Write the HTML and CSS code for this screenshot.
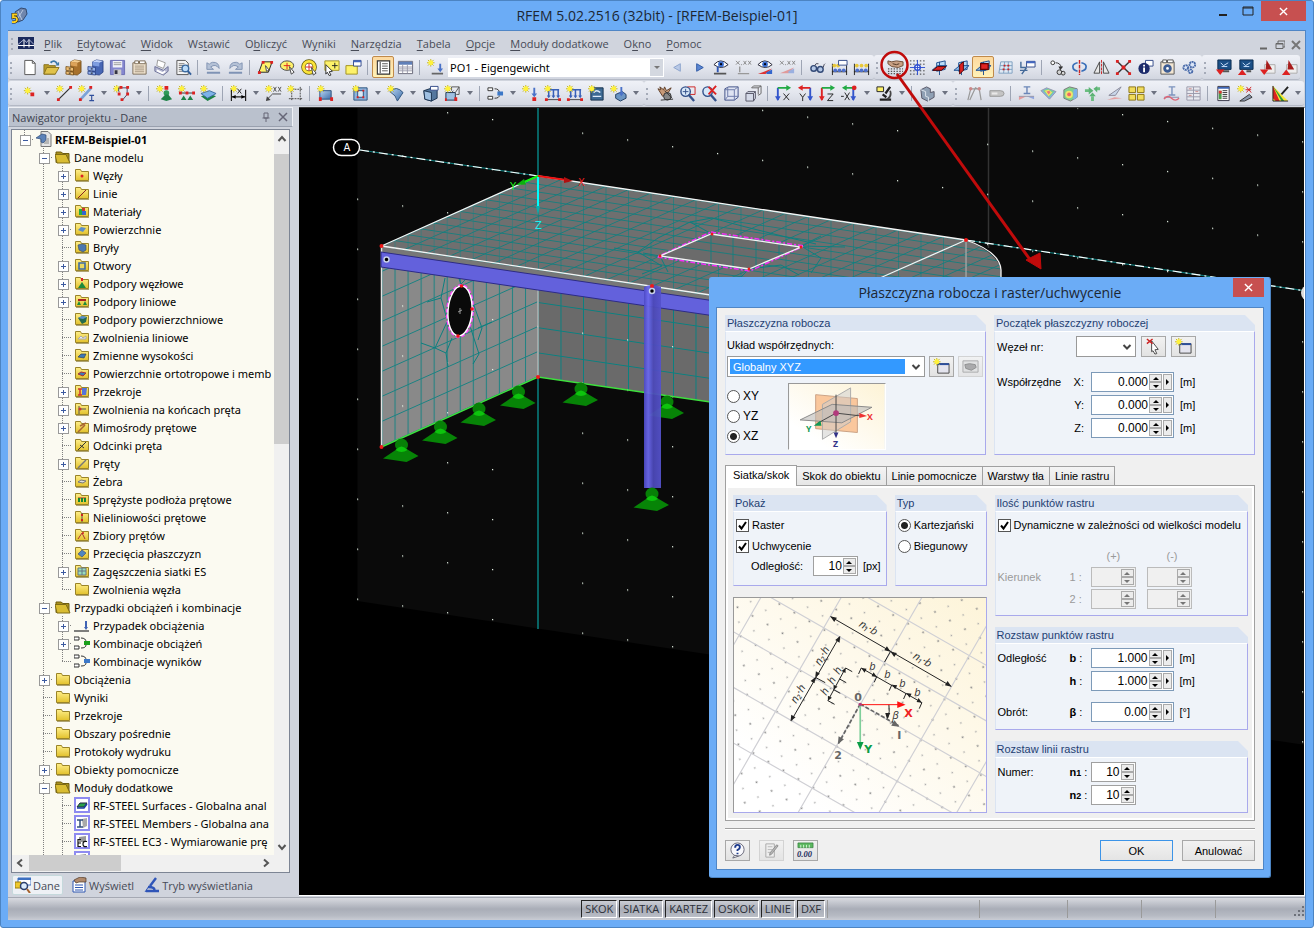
FILE: index.html
```html
<!DOCTYPE html>
<html lang="pl">
<head>
<meta charset="utf-8">
<title>RFEM 5.02.2516 (32bit) - [RFEM-Beispiel-01]</title>
<link rel="stylesheet" href="styles.css">
</head>
<body>
<svg class="defs" aria-hidden="true">
<defs>
<linearGradient id="gFold" x1="0" y1="0" x2="0" y2="1"><stop offset="0" stop-color="#ffef8a"/><stop offset="1" stop-color="#e2c12c"/></linearGradient>
<linearGradient id="gCream" x1="0" y1="1" x2="1" y2="0"><stop offset=".2" stop-color="#fff"/><stop offset="1" stop-color="#fdf3d6"/></linearGradient>
<linearGradient id="gBlue" x1="0" y1="0" x2="1" y2="1"><stop offset="0" stop-color="#b9d4f2"/><stop offset="1" stop-color="#3d6ea8"/></linearGradient>
<g id="st"><path d="M4 0v8M0 4h8M1 1l6 6M7 1l-6 6" stroke="#c4b41c" fill="none"/><circle cx="4" cy="4" r="2.600" fill="#fff23a"/></g>
<g id="eye"><path d="M1 6q7-8 15 0q-7 6-15 0z" fill="#fff" stroke="#223"/><circle cx="8.500" cy="5.500" r="3" fill="#3c6fd0"/><circle cx="8.500" cy="5.500" r="1.200" fill="#001"/></g>
<g id="plane"><path d="M6 4l9-2v9l-9 2z" fill="#b9dbf6" stroke="#1e4f8f"/><path d="M1 12h10l6-5h-10z" fill="#7fb4e8" fill-opacity=".8" stroke="#1e4f8f"/><path d="M9 3v14" stroke="#1e4f8f"/></g>
</defs>
<symbol id="new" viewBox="0 0 18 18"><path d="M4 1.500h8l3 3v12h-11z" fill="#fff" stroke="#555"/><path d="M12 1.500v3h3" fill="none" stroke="#555"/></symbol>
<symbol id="open" viewBox="0 0 18 18"><path d="M1 6h5l1 1h6v9h-12z" fill="#b89a28" stroke="#8a7420"/><path d="M4 9h13l-4 7h-12z" fill="#e0c24a" stroke="#8a7420"/><path d="M8 4q4-4 7 1" fill="none" stroke="#3d78a8" stroke-width="2"/><path d="M17 3v4h-4z" fill="#3d78a8"/></symbol>
<symbol id="cab" viewBox="0 0 18 18"><path d="M6 3l4-2 7 1v12l-4 3-7-1z" fill="#a8712c" stroke="#6b4712" stroke-width=".8"/><path d="M6 3l7 1 4-2-7-1z" fill="#f3cd90"/><path d="M6 3l7 1v4l-7-1z" fill="#dca35a"/><path d="M1 8l8 1v4l-8-1zM1 13l8 1v3l-8-1z" fill="#eebd72" stroke="#6b4712" stroke-width=".8"/><path d="M4 10.500h2M4 15h2" stroke="#222"/></symbol>
<symbol id="cabb" viewBox="0 0 18 18"><path d="M6 3l4-2 7 1v12l-4 3-7-1z" fill="#4766b4" stroke="#22397c" stroke-width=".8"/><path d="M6 3l7 1 4-2-7-1z" fill="#c2d4fa"/><path d="M6 3l7 1v4l-7-1z" fill="#7f9ee0"/><path d="M1 8l8 1v4l-8-1zM1 13l8 1v3l-8-1z" fill="#94b2ee" stroke="#22397c" stroke-width=".8"/><path d="M4 10.500h2M4 15h2" stroke="#111"/></symbol>
<symbol id="save" viewBox="0 0 18 18"><path d="M1.500 1.500h15v15h-15z" fill="#8587cf" stroke="#6a6cb4"/><path d="M4 2h10v7h-10z" fill="#f2f2f8"/><path d="M5 4h8M5 6h8" stroke="#999"/><path d="M5 11h8v6h-8z" fill="#ccc"/><path d="M6 12h3v4h-3z" fill="#334"/></symbol>
<symbol id="note" viewBox="0 0 18 18"><path d="M2 4h14v12h-14z" fill="#f3e6d2" stroke="#7a6a55"/><path d="M4 2h4v3h-4zM9 2h6v3h-6z" fill="#fff" stroke="#7a6a55"/><path d="M4 7.500h10M4 9.500h10M4 11.500h10M4 13.500h10" stroke="#a0927c"/></symbol>
<symbol id="print" viewBox="0 0 18 18"><path d="M5 1l8 3-2 6-7-3z" fill="#fff" stroke="#999"/><path d="M2 8l9 4 5-4v5l-5 4-9-4z" fill="#b5b8d2" stroke="#6b7096"/><path d="M4 12l6 3 3-2" stroke="#fff" fill="none" stroke-width="2"/></symbol>
<symbol id="prev" viewBox="0 0 18 18"><path d="M2 1.500h9l3 3v12h-12z" fill="#f4f4f4" stroke="#555"/><path d="M4 5h6M4 7h6M4 9h4M4 11h4M4 13h5" stroke="#777"/><circle cx="11" cy="10" r="3.500" fill="#bcdcf8" stroke="#3c6ba0" stroke-width="1.500"/><path d="M13.500 12.500l3.500 4" stroke="#335f9a" stroke-width="2"/></symbol>
<symbol id="undo" viewBox="0 0 18 18"><path d="M2 4v7h7l-3-2.500q5-4 9 1.500q0-7-7-6.500q-2 .5-3.500 2z" fill="#b4c1d6" stroke="#8294b2"/><path d="M2 14.500h14" stroke="#7f93b5" stroke-width="2"/></symbol>
<symbol id="redo" viewBox="0 0 18 18"><path d="M16 4v7h-7l3-2.500q-5-4-9 1.500q0-7 7-6.500q2 .5 3.500 2z" fill="#b4c1d6" stroke="#8294b2"/><path d="M2 14.500h14" stroke="#7f93b5" stroke-width="2"/></symbol>
<symbol id="selpar" viewBox="0 0 18 18"><path d="M6 3h10l-4 11h-10z" fill="#fdf26a" stroke="#222"/><path d="M5 2h3v3h-3zM14 2h3v3h-3zM1 13h3v3h-3z" fill="#d22"/><path d="M9 7l4 5-3 1z" fill="#fff" stroke="#444"/></symbol>
<symbol id="selell" viewBox="0 0 18 18"><ellipse cx="8.500" cy="7" rx="7" ry="5" fill="#fdf26a" stroke="#444"/><path d="M8.500 4v7M5 7h7" stroke="#d22"/><path d="M11 8l5 6-3 2z" fill="#fff" stroke="#444"/></symbol>
<symbol id="selcir" viewBox="0 0 18 18"><circle cx="8.500" cy="8.500" r="6" fill="#fff" stroke="#5f5600" stroke-width="4.500"/><circle cx="8.500" cy="8.500" r="6" fill="none" stroke="#fbe33a" stroke-width="3"/><path d="M8.500 4.500v8M4.500 8.500h8" stroke="#d22"/><path d="M11 9l5 6-3 2z" fill="#fff" stroke="#444"/></symbol>
<symbol id="selrec" viewBox="0 0 18 18"><path d="M2 2h15v10h-15z" fill="#fdf26a" stroke="#a09020"/><path d="M12.500 4v6M9.500 7h6" stroke="#222"/><path d="M3 6l7 7-3.500.5 2 3.500-2 .5-2-3.500-1.500 2z" fill="#fff" stroke="#333"/></symbol>
<symbol id="selwin" viewBox="0 0 18 18"><path d="M1 7h12v9h-12z" fill="#fdf26a" stroke="#a09020"/><path d="M9 1.500h8v6h-8z" fill="#fff" stroke="#334a88"/><path d="M9 2.500h8" stroke="#4467c0" stroke-width="2"/></symbol>
<symbol id="nav" viewBox="0 0 18 18"><path d="M2.500 2h13v14h-13z" fill="#fff" stroke="#333" stroke-width="1.200"/><path d="M5.500 3v12" stroke="#333"/><path d="M7.500 5h6M7.500 7.500h6M7.500 10h6M7.500 12.500h6" stroke="#555"/></symbol>
<symbol id="table" viewBox="0 0 18 18"><path d="M1.500 2.500h15v13h-15z" fill="#fff" stroke="#667"/><path d="M2 3h14v3h-14z" fill="#5f7fb8"/><path d="M2 8.500h14M2 10.500h14M2 12.500h14M6 6v9M11 6v9" stroke="#99a"/></symbol>
<symbol id="lcase" viewBox="0 0 18 18"><use href="#st"/><path d="M5 15.500h12" stroke="#666" stroke-width="2"/><path d="M13 5v5h-2l3 4 3-4h-2v-5z" fill="#4a72c8"/></symbol>
<symbol id="left" viewBox="0 0 18 18"><path d="M12 5v8l-7-4z" fill="#b9c9e6" stroke="#8ba3cc"/></symbol>
<symbol id="right" viewBox="0 0 18 18"><path d="M6 5v8l7-4z" fill="#5b86d2" stroke="#2f59a6"/></symbol>
<symbol id="eyel" viewBox="0 0 18 18"><use href="#eye"/><path d="M5 8v6" stroke="#2e56b4" stroke-width="2"/><path d="M1 15.500h13" stroke="#555" stroke-width="2"/></symbol>
<symbol id="xx1" viewBox="0 0 18 18"><path d="M1 2l4 4M5 2l-4 4M6.500 6h1M9 2l3 4M12 2l-3 4M14 2l3 4M17 2l-3 4" stroke="#888"/><path d="M5 8v6M3 15.500h12" stroke="#999" stroke-width="1.500"/></symbol>
<symbol id="eyer" viewBox="0 0 18 18"><use href="#eye"/><path d="M1 16l15-6-7 6z" fill="#d33"/><path d="M10 14l6-3v5h-6z" fill="#36c"/></symbol>
<symbol id="xx2" viewBox="0 0 18 18"><path d="M1 2l4 4M5 2l-4 4M6.500 6h1M9 2l3 4M12 2l-3 4M14 2l3 4M17 2l-3 4" stroke="#888"/><path d="M1 15l15-6-6 6z" fill="#e09a9a"/><path d="M10 13l6-3v5h-6z" fill="#9ab0e0"/></symbol>
<symbol id="glass" viewBox="0 0 18 18"><circle cx="5" cy="10" r="3" fill="#b5c8e6" stroke="#334a77" stroke-width="1.500"/><circle cx="12" cy="11" r="3" fill="#b5c8e6" stroke="#334a77" stroke-width="1.500"/><path d="M6 7q1-3 4-2M15 9q1-4 2-4" stroke="#445" fill="none"/></symbol>
<symbol id="hist" viewBox="0 0 18 18"><path d="M1.500 5v12M16.500 5v12M1 13.500h16" stroke="#222"/><g fill="#4e70cc"><circle cx="4.500" cy="12" r="2"/><circle cx="9" cy="12" r="2"/><circle cx="13.500" cy="12" r="2"/></g><g fill="#e8c83a"><circle cx="3.500" cy="7" r="2"/><circle cx="7.500" cy="7" r="2"/></g><path d="M8 1.500h9v5h-9z" fill="#fff" stroke="#334a88"/></symbol>
<symbol id="hist2" viewBox="0 0 18 18"><path d="M1.500 5v12M16.500 5v12M1 13.500h16" stroke="#222"/><g fill="#4e70cc"><circle cx="4.500" cy="12" r="2"/><circle cx="9" cy="12" r="2"/><circle cx="13.500" cy="12" r="2"/></g><g fill="#e8c83a"><circle cx="4" cy="7" r="2"/><circle cx="9" cy="7" r="2"/><circle cx="14" cy="7" r="2"/></g></symbol>
<symbol id="wplane" viewBox="0 0 18 18"><path d="M1 10.500h16M1 13h16M1 15.500h16" stroke="#555" stroke-width="1.300" stroke-dasharray="1.500 1.500"/><path d="M1 2l4 1 5-1 7 1v4l-5 2-7-1-4-3z" fill="#c9a184" stroke="#6b4a33"/><path d="M6 5l4 1 3-1" stroke="#4d3322" fill="none"/></symbol>
<symbol id="wgrid" viewBox="0 0 18 18"><path d="M1 2h16M1 5.500h16M1 12.500h16M1 16h16" stroke="#333" stroke-dasharray="1.500 2"/><circle cx="9" cy="9" r="3" fill="#eef" stroke="#2f50d0" stroke-width="1.500"/><path d="M9 1v16M1 9h16" stroke="#2f50d0"/></symbol>
<symbol id="pl1" viewBox="0 0 18 18"><use href="#plane"/><path d="M2 12h9l5-4h-9z" fill="#d22" stroke="#500"/></symbol>
<symbol id="pl2" viewBox="0 0 18 18"><use href="#plane"/><path d="M7 6l4-3v9l-4 4z" fill="#d22" stroke="#500"/></symbol>
<symbol id="pl3" viewBox="0 0 18 18"><use href="#plane"/><path d="M6 5h8v6h-8z" fill="#e02424" stroke="#600" stroke-width="1.300"/></symbol>
<symbol id="shear" viewBox="0 0 18 18"><path d="M4 3h12v12h-14zM3 7h13M3 11h13M8 3l-1 12M12 3v12" fill="#dfe9f4" stroke="#7fa0c0"/><path d="M7 6h2v2h-2zM11 6h2v2h-2zM6 10h2v2h-2zM11 10h2v2h-2z" fill="#c22"/></symbol>
<symbol id="lay" viewBox="0 0 18 18"><path d="M8 2.500h9v6h-9z" fill="#fff" stroke="#334a88"/><path d="M8 3.500h9" stroke="#4467c0" stroke-width="2"/><path d="M2 3v6h6M3 16l5-7M1 12h8" stroke="#446a99" fill="none" stroke-width="1.500"/></symbol>
<symbol id="move" viewBox="0 0 18 18"><circle cx="4" cy="4" r="2" fill="#fff" stroke="#333"/><path d="M7 4q5 0 6 5" fill="none" stroke="#333"/><path d="M10 8h5l-3 4z" fill="#333"/><circle cx="11" cy="14" r="2.500" fill="#d5d5d5" stroke="#333"/><circle cx="15" cy="15" r="2" fill="#d5d5d5" stroke="#333"/></symbol>
<symbol id="rot" viewBox="0 0 18 18"><path d="M7 4q-5 1-5 4 0 4 5 5M11 4q5 1 5 4 0 4-5 5" fill="none" stroke="#3a6fb8" stroke-width="1.800"/><path d="M9 1v16" stroke="#c22" stroke-width="1.500" stroke-dasharray="4 1"/></symbol>
<symbol id="mir" viewBox="0 0 18 18"><path d="M7 3v12h-6zM11 3v12h6z" fill="#e8e8e8" stroke="#444"/><path d="M9 1v16" stroke="#c22" stroke-dasharray="3 1"/></symbol>
<symbol id="div" viewBox="0 0 18 18"><path d="M2 2l14 14M16 2l-14 14" stroke="#333" stroke-width="1.500"/><path d="M1 1h3v3h-3zM14 1h3v3h-3zM1 14h3v3h-3zM14 14h3v3h-3zM7 7h4v4h-4z" fill="#d22"/></symbol>
<symbol id="info" viewBox="0 0 18 18"><path d="M9 1.500h8v6h-8z" fill="#fff" stroke="#334a88"/><circle cx="7.500" cy="10" r="6" fill="#1c2b6b"/><path d="M7.500 9v5M7.500 6v2" stroke="#fff" stroke-width="2"/></symbol>
<symbol id="opt" viewBox="0 0 18 18"><path d="M2 3h14v13h-14z" fill="#f3e6d2" stroke="#555"/><path d="M4 1h4v3h-4zM9 1h6v3h-6z" fill="#fff" stroke="#555"/><circle cx="9" cy="10" r="3" fill="#fff" stroke="#3b5b93" stroke-width="3"/></symbol>
<symbol id="gears" viewBox="0 0 18 18"><g fill="#dbe6f8" stroke="#4769a8" stroke-width="2" stroke-dasharray="2 .6"><circle cx="5" cy="9" r="2.500"/><circle cx="12" cy="6" r="3"/><circle cx="10" cy="13" r="2"/></g></symbol>
<symbol id="mon1" viewBox="0 0 18 18"><path d="M3 1h14v10h-14z" fill="#1b4f86" stroke="#0d2d50"/><path d="M6 4l3 3 5-3M7 8h6" stroke="#cfe4ff" fill="none"/><path d="M8 13h7" stroke="#555" stroke-width="2"/><path d="M1 11h9l-4.500 6z" fill="#d22"/></symbol>
<symbol id="mon2" viewBox="0 0 18 18"><path d="M3 1h14v10h-14z" fill="#1b4f86" stroke="#0d2d50"/><path d="M6 4l3 3 5-3M7 8h6" stroke="#cfe4ff" fill="none"/><path d="M10 13h5" stroke="#555" stroke-width="2"/><path d="M1 17h9l-4.500-6z" fill="#d22"/></symbol>
<symbol id="ar1" viewBox="0 0 18 18"><path d="M6 6h11v9h-11z" fill="#eee" stroke="#aaa"/><path d="M8 1l6 10h-7z" fill="#a81c1c"/><path d="M1 11h9l-4.500 6z" fill="#d22"/></symbol>
<symbol id="ar2" viewBox="0 0 18 18"><path d="M6 6h11v9h-11z" fill="#eee" stroke="#aaa"/><path d="M8 1l6 10h-7z" fill="#a81c1c"/><path d="M1 17h9l-4.500-6z" fill="#d22"/></symbol>

<symbol id="node" viewBox="0 0 18 18"><use href="#st" x="3" y="2"/><path d="M10 8h4v4h-4z" fill="#d22"/></symbol>
<symbol id="line" viewBox="0 0 18 18"><use href="#st"/><path d="M3 15l12-12" stroke="#333" stroke-width="1.300"/><path d="M1 14h3v3h-3zM14 1h3v3h-3z" fill="#d22"/></symbol>
<symbol id="member" viewBox="0 0 18 18"><use href="#st"/><path d="M3 15l11-12" stroke="#7ba2d8" stroke-width="3"/><path d="M1 14h3v3h-3zM12 1h3v3h-3z" fill="#d22"/><path d="M12 11h5M12 16.500h5M14.500 11v5" stroke="#2f4f9c" stroke-width="1.200"/></symbol>
<symbol id="poly" viewBox="0 0 18 18"><use href="#st"/><path d="M6 7v-4h9v7l-5 6" fill="none" stroke="#446"/><path d="M5 8h3v3h-3zM7 1h3v3h-3zM14 1h3v3h-3zM14 8h3v3h-3zM8 14h3v3h-3z" fill="#d22"/></symbol>
<symbol id="sup" viewBox="0 0 18 18"><use href="#st"/><path d="M9 1h4v4h-4z" fill="#d22"/><circle cx="11" cy="8.500" r="3" fill="#2e9b57"/><path d="M10 10l-5 5 6 2 6-2-4-5z" fill="#1e8246"/></symbol>
<symbol id="lsup" viewBox="0 0 18 18"><use href="#st"/><path d="M2 8.500h14" stroke="#333"/><path d="M1 7h3v3h-3zM8 7h3v3h-3zM15 7h3v3h-3z" fill="#d22"/><path d="M6 11l3 5h-6zM13 11l3 5h-6z" fill="#1e8246"/></symbol>
<symbol id="ssup" viewBox="0 0 18 18"><path d="M1 12l7 5 9-5-7-3z" fill="#1e8246"/><path d="M1 9l7 5 9-5-7-3z" fill="#7eb3e8" stroke="#3a6b9c"/><use href="#st"/></symbol>
<symbol id="dim" viewBox="0 0 18 18"><use href="#st"/><path d="M1.500 5v12M16.500 5v12M2 12.500h14" stroke="#222" stroke-width="1.300"/><path d="M2 12.500l4-2v4zM16 12.500l-4-2v4z"/><path d="M8 4l4 5M12 4l-4 5" stroke="#222"/></symbol>
<symbol id="txt" viewBox="0 0 18 18"><use href="#st"/><path d="M9 2l3 5M12 2l-3 5M14 2l3 5M17 2l-3 5" stroke="#555"/><path d="M17 9.500h-9l-6 6" stroke="#444" fill="none"/><path d="M1 17l1-5 4 4z" fill="#444"/></symbol>
<symbol id="guide" viewBox="0 0 18 18"><path d="M5 2v15M14 2v15M2 4.500h15M2 14.500h15" stroke="#444" stroke-dasharray="2 1"/><use href="#st"/></symbol>
<symbol id="surf" viewBox="0 0 18 18"><path d="M3 6h12v9h-12z" fill="url(#gBlue)" stroke="#2d527c"/><path d="M14 13h3v4h-3zM2 13h3v4h-3z" fill="#d22"/><use href="#st"/></symbol>
<symbol id="opng" viewBox="0 0 18 18"><path d="M2 3h14v13h-14z" fill="#8db4de" stroke="#2d527c"/><path d="M6 6h6v7h-6z" fill="#dde8f4" stroke="#2d527c"/><path d="M5 5h2v2h-2zM11 5h2v2h-2zM5 12h2v2h-2zM11 12h2v2h-2z" fill="#d22"/><use href="#st"/></symbol>
<symbol id="curv" viewBox="0 0 18 18"><path d="M3 7q7-7 14 1l-6 9q-1-6-8-10z" fill="url(#gBlue)" stroke="#2d527c"/><use href="#st"/></symbol>
<symbol id="solid" viewBox="0 0 18 18"><path d="M2 6l9-3 5 2v9l-6 3-7-2z" fill="#54779e" stroke="#1c3350"/><path d="M2 6l8 2v9l-7-2z" fill="#9fc0e2" stroke="#1c3350"/><path d="M9 1.500h8v4h-8z" fill="#fff" stroke="#334a88"/></symbol>
<symbol id="solid2" viewBox="0 0 18 18"><path d="M2 8h10v8h-10z" fill="#9fc0e2" stroke="#1c3350"/><path d="M8 6v-4h8v8h-3M10 6l-2 2M16 2l-4 6" fill="none" stroke="#555"/><path d="M11 13h3v4h-3zM1 14h2v3h-2z" fill="#d22"/><use href="#st"/></symbol>
<symbol id="comb" viewBox="0 0 18 18"><path d="M1 3h5v3h-5zM1 12h5v3h-5z" fill="#fff" stroke="#333"/><path d="M8 4q5 0 5 4M8 14q5 0 5-3" fill="none" stroke="#333"/><path d="M11 7h6v4h-6z" fill="#3c78c8"/></symbol>
<symbol id="nload" viewBox="0 0 18 18"><use href="#st"/><path d="M12 3v6h-2l3 4 3-4h-2v-6z" fill="#4a72c8"/><path d="M11 13h4v4h-4z" fill="#d22"/></symbol>
<symbol id="lload" viewBox="0 0 18 18"><path d="M4 5h12M5 5v7M10 5v7M15 5v7" stroke="#3760b8" stroke-width="1.600" fill="none"/><path d="M3 11h4l-2 3zM8 11h4l-2 3zM13 11h4l-2 3z" fill="#3760b8"/><path d="M2 15.500h15" stroke="#444"/><path d="M1 14h3v3h-3zM15 14h3v3h-3z" fill="#d22"/><use href="#st"/></symbol>
<symbol id="sload" viewBox="0 0 18 18"><path d="M3 3h13v13h-13z" fill="#3d6a94" stroke="#15304b"/><path d="M6 8q3-4 7 0M5 12h9" stroke="#dceafa" stroke-width="1.500" fill="none"/><use href="#st"/></symbol>
<symbol id="vload" viewBox="0 0 18 18"><path d="M6 10l7-3 4 3v4l-6 3-5-3z" fill="#6c96c4" stroke="#213f63"/><path d="M11 2v6h-2l3 4 3-4h-2v-6z" fill="#4a72c8"/><use href="#st"/></symbol>
<symbol id="pan" viewBox="0 0 18 18"><path d="M1 4l3 1-1-3 4 3 1-3 2 4 5-3-3 5-6 4z" fill="#c79a78" stroke="#5e3d26"/><circle cx="11" cy="12" r="4" fill="#888" stroke="#333"/><path d="M4 16l13-1M8 6l8 8" stroke="#333"/></symbol>
<symbol id="zoomw" viewBox="0 0 18 18"><path d="M9 2h8v8h-8z" fill="none" stroke="#c22"/><circle cx="7" cy="7" r="5" fill="#d7e7f8" stroke="#33518a" stroke-width="1.500"/><path d="M4 7h6M7 4v6" stroke="#33518a"/><path d="M10 10l6 7" stroke="#33518a" stroke-width="2.500"/></symbol>
<symbol id="zoomx" viewBox="0 0 18 18"><circle cx="7" cy="7" r="5" fill="#d7e7f8" stroke="#33518a" stroke-width="1.500"/><path d="M10 10l6 7" stroke="#33518a" stroke-width="2.500"/><path d="M8 2l8 8M16 1l-8 9" stroke="#d22" stroke-width="2"/></symbol>
<symbol id="cube" viewBox="0 0 18 18"><path d="M2 4l4-2h10v11l-4 3h-10z" fill="#dfe4f2" stroke="#3f4f86"/><path d="M2 5h10v11M12 5l4-3M5 2v10h11M5 12l-3 4" fill="none" stroke="#6b79a8"/></symbol>
<symbol id="cubes" viewBox="0 0 18 18"><path d="M7 3l2-2h8v8l-3 2M7 3h7v7M14 3l3-2" fill="#e8eaf2" stroke="#666"/><path d="M1 9l2-2h8v7l-2 3h-8zM1 9h8v8M9 9l2-2" fill="#d5dae8" stroke="#556"/></symbol>
<symbol id="vx" viewBox="0 0 18 18"><path d="M3 3v13" stroke="#35c" stroke-width="2"/><path d="M3 3h11" stroke="#2a4" stroke-width="2"/><path d="M12 0l5 3-5 3z" fill="#2a4"/><path d="M0 12h6l-3 5z" fill="#35c"/><path d="M9 9l6 7M15 9l-6 7" stroke="#222"/></symbol>
<symbol id="vy" viewBox="0 0 18 18"><path d="M14 3v13" stroke="#35c" stroke-width="2"/><path d="M14 3h-11" stroke="#d22" stroke-width="2"/><path d="M6 0l-5 3 5 3z" fill="#d22"/><path d="M11 12h6l-3 5z" fill="#35c"/><path d="M3 9l3 4v4M9 9l-3 4" stroke="#222" fill="none"/></symbol>
<symbol id="vz" viewBox="0 0 18 18"><path d="M3 3v13" stroke="#d22" stroke-width="2"/><path d="M3 3h11" stroke="#2a4" stroke-width="2"/><path d="M12 0l5 3-5 3z" fill="#2a4"/><path d="M0 12h6l-3 5z" fill="#d22"/><path d="M9 9.500h6l-6 7h6" stroke="#222" fill="none"/></symbol>
<symbol id="vmx" viewBox="0 0 18 18"><path d="M13 3v13" stroke="#35c" stroke-width="2"/><path d="M13 3h-10" stroke="#2a4" stroke-width="2"/><path d="M6 0l-5 3 5 3z" fill="#2a4"/><circle cx="14" cy="3" r="2.500" fill="#d22"/><path d="M10 12h6l-3 5z" fill="#35c"/><path d="M0 12h3M4 8l5 8M9 8l-5 8" stroke="#222"/></symbol>
<symbol id="micro" viewBox="0 0 18 18"><path d="M1 2h7v5h-7z" fill="#fdf26a" stroke="#222"/><path d="M15 2l-5 7M4 15.500h12M7 10l4 3" stroke="#222" stroke-width="2.400" fill="none"/><path d="M15 6q2 6-3 9" stroke="#444" stroke-width="1.800" fill="none"/></symbol>
<symbol id="visib" viewBox="0 0 18 18"><path d="M2 5l6-3 4 2v4l4-1v6l-7 4-6-3z" fill="#8fa0b4" stroke="#556"/><path d="M2 5l5 2v5l3 1v4" fill="none" stroke="#dfe6ee"/></symbol>
<symbol id="defo" viewBox="0 0 18 18"><path d="M2 16l3-12h9l2 12M4 16l6-13 4 2" fill="none" stroke="#999" stroke-width="1.300"/><circle cx="5" cy="4" r="1.800" fill="#c88"/><circle cx="14" cy="4" r="1.800" fill="#c88"/></symbol>
<symbol id="cyl" viewBox="0 0 18 18"><path d="M2 6h11q4 0 4 3t-4 3h-11z" fill="#c4c4c4" stroke="#999"/><path d="M4 8h6v2h-6z" fill="#e9e9e9"/></symbol>
<symbol id="ires" viewBox="0 0 18 18"><path d="M6 2h7M9.500 2v7M6 9h7" stroke="#6a86b8" stroke-width="1.500"/><path d="M1 16l8-4h-8z" fill="#e59a9a"/><path d="M9 12l8 3v-3z" fill="#8fa5dd"/><path d="M1 12h16" stroke="#99a"/></symbol>
<symbol id="sres" viewBox="0 0 18 18"><path d="M1 6l6-3 10 4-7 8z" fill="#7fb0e8" stroke="#99a"/><path d="M3 6l5-2 7 3-5 6z" fill="#7fd28f"/><path d="M5 6l4-1 4 3-4 4z" fill="#f1e36b"/><path d="M7 7l3-1 1 2-2 2z" fill="#e77"/></symbol>
<symbol id="vres" viewBox="0 0 18 18"><path d="M2 5l6-3 8 2v9l-7 4-7-3z" fill="#7fd28f" stroke="#777"/><path d="M12 5l4-1v9l-4 3z" fill="#7fb0e8"/><circle cx="7.500" cy="10" r="4" fill="#f1e36b"/><circle cx="7.500" cy="10" r="2" fill="#e66"/></symbol>
<symbol id="react" viewBox="0 0 18 18"><path d="M9 17v-5M1 6h5M17 4h-4" stroke="#6bbd80" stroke-width="3"/><path d="M5.500 12h7l-3.500-4zM5 2l5 4-5 4zM14 1v7l-4-4z" fill="#5cb375"/></symbol>
<symbol id="memr" viewBox="0 0 18 18"><path d="M3 11l13-9-6 9z" fill="#c9d7ea" stroke="#889"/><path d="M1 16l8-3 8 1z" fill="#e5a0a0"/></symbol>
<symbol id="grp" viewBox="0 0 18 18"><path d="M1 2h7v6h-7zM10 2h7v6h-7zM1 10h7v6h-7zM10 10h7v6h-7z" fill="#f1dc5c" stroke="#8a7414"/></symbol>
<symbol id="isec" viewBox="0 0 18 18"><path d="M6 2h7M9.500 2v8M6 10.500h7" stroke="#7c93bd" stroke-width="1.500"/><path d="M1 13h16" stroke="#88a"/><path d="M1 15q4-5 8-1t8 0" fill="none" stroke="#d67" stroke-width="1.500"/></symbol>
<symbol id="tabl" viewBox="0 0 18 18"><path d="M2 2h14v14h-14zM2 5.500h14M2 9h14M2 12.500h14M9 2v14" fill="#e8eaf0" stroke="#99a"/><path d="M4 4h3M11 7h3M4 11h3" stroke="#c88"/></symbol>
<symbol id="ctrl" viewBox="0 0 18 18"><path d="M3 1.500h12v15h-12z" fill="#fff" stroke="#334"/><path d="M3 3h12" stroke="#3f66b5" stroke-width="2"/><path d="M8 6h5M8 8h5M8 10h5M8 12h5M8 14h5" stroke="#333"/><path d="M4 6h3v9h-3z" fill="#4c9c4c"/><path d="M4 6h3v3h-3z" fill="#d33"/></symbol>
<symbol id="wand" viewBox="0 0 18 18"><path d="M3 17l10-7 3 3-8 4z" fill="#8a97ad" stroke="#333"/><path d="M9 5h6M10 2l5 6M15 2l-5 6" stroke="#c22"/><use href="#st"/></symbol>
<symbol id="colr" viewBox="0 0 18 18"><path d="M1 1v16h16z" fill="#f6e635"/><path d="M1 1v8l8 8h4z" fill="#2a9a3a"/><path d="M1 1v11l5 5h4z" fill="#f6e635"/><path d="M1 1v13l3 3h4z" fill="#d22"/><path d="M17 2l-7 8" stroke="#222" stroke-width="2"/><path d="M1 1v16h16" fill="none" stroke="#222"/></symbol>

<symbol id="f" viewBox="0 0 16 16"><path d="M1.500 2.500h5l1 2h7v9h-13z" fill="url(#gFold)" stroke="#9a8428"/><path d="M2 14.500h13" stroke="#7b6a20" opacity=".6"/></symbol>
<symbol id="fo" viewBox="0 0 16 16"><path d="M1 3h5l2 1.500h6v9h-13z" fill="#a8901c" stroke="#6f5d10"/><path d="M0 5.500h11l4 8.500h-13z" fill="#d9bc32" stroke="#7f6c14"/></symbol>
<symbol id="rf" viewBox="0 0 16 16"><path d="M5 .5h7l3 3v12h-10z" fill="#e4e4e4" stroke="#777"/><path d="M0 7l6-4 4 1v5l-3 3-2-1v-3z" fill="#5c82b8" stroke="#2e4a78" stroke-width=".7"/><path d="M11 8h2M9 10h4M8 12h5" stroke="#888"/></symbol>
<symbol id="mod" viewBox="0 0 16 16"><path d="M1 1h14v14h-14z" fill="#fff" stroke="#8e8bf0" stroke-width="2"/></symbol>
<symbol id="pin" viewBox="0 0 10 10"><path d="M3 1h4v5h-4zM1.500 6h7M5 6v4" fill="none" stroke="#667"/></symbol>
<symbol id="x" viewBox="0 0 10 10"><path d="M1 1l8 8M9 1l-8 8" fill="none" stroke="currentColor" stroke-width="1.500"/></symbol>
<symbol id="newwin" viewBox="0 0 18 18"><path d="M5 6h12v10h-12z" fill="#e4e4ee" stroke="#444"/><path d="M5 6.500h12" stroke="#2c4f9e" stroke-width="2"/><use href="#st"/></symbol>
<symbol id="sup7" viewBox="0 0 40 26"><circle cx="20" cy="7" r="6.500" fill="#078007"/><path d="M20 8l-18.500 12.500 23.500 3.500 12-6z" fill="#078407"/><path d="M14 12q6-7 12 0-6 4-12 0z" fill="#0dc40d"/></symbol>
</svg>

<div class="window">
<header class="titlebar">
  <svg class="applogo" viewBox="0 0 18 18"><path d="M5 5l6-4 5 1 1 5-4 6-5 2z" fill="#6f86ad" stroke="#334a70"/><path d="M8 4l4 9M13 3l-5 8" stroke="#b9c8e0"/><path d="M7 7.500h-4v3q4-1 4 2t-5 2.500" fill="none" stroke="#222" stroke-width="3"/><path d="M7 7.500h-4v3q4-1 4 2t-5 2.500" fill="none" stroke="#ffd21c" stroke-width="1.800"/></svg>
  <h1>RFEM 5.02.2516 (32bit) - [RFEM-Beispiel-01]</h1>
  <div class="winbtns">
    <button class="min" aria-label="Minimalizuj"><svg viewBox="0 0 10 10"><path d="M1 9h8" stroke="#222" stroke-width="2"/></svg></button>
    <button class="max" aria-label="Maksymalizuj"><svg viewBox="0 0 12 10"><path d="M1 1h10v8h-10z" fill="none" stroke="#222"/><path d="M1 2h10" stroke="#222"/></svg></button>
    <button class="close" aria-label="Zamknij"><svg viewBox="0 0 10 10"><use href="#x"/></svg></button>
  </div>
</header>

<div class="client">
<nav class="menubar">
  <span class="grip"></span>
  <svg class="bridge" viewBox="0 0 16 12"><path d="M0 0h16v12h-16z" fill="#1b2a5c"/><path d="M0 8.500h16M6 2.500v8M11 2.500v8" stroke="#fff"/><path d="M0 7.500l6-5 2.500 3 2.500-3 5 5" stroke="#cfd6ee" stroke-width=".8" fill="none"/></svg>
  <button><u>P</u>lik</button><button><u>E</u>dytować</button><button><u>W</u>idok</button><button>Ws<u>t</u>awić</button><button>O<u>b</u>liczyć</button><button>W<u>y</u>niki</button><button><u>N</u>arzędzia</button><button><u>T</u>abela</button><button><u>O</u>pcje</button><button><u>M</u>oduły dodatkowe</button><button>O<u>k</u>no</button><button><u>P</u>omoc</button>
  <div class="mdi">
    <button aria-label="Minimalizuj dokument"><svg viewBox="0 0 10 10"><path d="M1 8.500h7" stroke="#666" stroke-width="2"/></svg></button>
    <button aria-label="Przywróć dokument"><svg viewBox="0 0 10 10"><path d="M1 3.500h7v5h-7zM3 3v-2h7v6h-2M1 4h7" fill="none" stroke="#666"/></svg></button>
    <button aria-label="Zamknij dokument"><svg viewBox="0 0 10 10"><path d="M1 1l8 8M9 1l-8 8" stroke="#777" stroke-width="2"/></svg></button>
  </div>
</nav>

<div class="row">
<div class="toolbar">
<span class="grip"></span>
<button aria-label="Nowy"><svg><use href="#new"/></svg></button><button aria-label="Otwórz"><svg><use href="#open"/></svg></button><button aria-label="Menedżer"><svg><use href="#cab"/></svg></button><button aria-label="Bloki"><svg><use href="#cabb"/></svg></button><button aria-label="Zapisz"><svg><use href="#save"/></svg></button><button aria-label="Dane ogólne"><svg><use href="#note"/></svg></button><button aria-label="Drukuj"><svg><use href="#print"/></svg></button><button aria-label="Podgląd"><svg><use href="#prev"/></svg></button>
<i class="sep"></i>
<button aria-label="Cofnij"><svg><use href="#undo"/></svg></button><button aria-label="Ponów"><svg><use href="#redo"/></svg></button>
<i class="sep"></i>
<button aria-label="Wybór"><svg><use href="#selpar"/></svg></button><button aria-label="Wybór elipsą"><svg><use href="#selell"/></svg></button><button aria-label="Wybór pierścieniem"><svg><use href="#selcir"/></svg></button><button aria-label="Dodaj do wyboru"><svg><use href="#selrec"/></svg></button><button aria-label="Wybór specjalny"><svg><use href="#selwin"/></svg></button>
<i class="sep"></i>
<button class="on" aria-label="Nawigator"><svg><use href="#nav"/></svg></button><button aria-label="Tabela"><svg><use href="#table"/></svg></button>
<i class="sep"></i>
<button aria-label="Nowy przypadek"><svg><use href="#lcase"/></svg></button>
<select class="case" aria-label="Przypadek obciążenia"><option>PO1 - Eigengewicht</option></select>
<button aria-label="Poprzedni"><svg><use href="#left"/></svg></button><button aria-label="Następny"><svg><use href="#right"/></svg></button><button aria-label="Pokaż obciążenia"><svg><use href="#eyel"/></svg></button><button aria-label="Wartości obciążeń"><svg><use href="#xx1"/></svg></button><button aria-label="Pokaż wyniki"><svg><use href="#eyer"/></svg></button><button aria-label="Wartości wyników"><svg><use href="#xx2"/></svg></button>
<i class="sep"></i>
<button aria-label="Widok"><svg><use href="#glass"/></svg></button><button aria-label="Obliczenia"><svg><use href="#hist"/></svg></button><button aria-label="Oblicz wszystko"><svg><use href="#hist2"/></svg></button>
</div>
<div class="toolbar">
<span class="grip"></span>
<button aria-label="Płaszczyzna robocza"><svg><use href="#wplane"/></svg></button><button aria-label="Raster"><svg><use href="#wgrid"/></svg></button><button aria-label="Płaszczyzna XY"><svg><use href="#pl1"/></svg></button><button aria-label="Płaszczyzna YZ"><svg><use href="#pl2"/></svg></button><button class="on" aria-label="Płaszczyzna XZ"><svg><use href="#pl3"/></svg></button><button aria-label="Siatka"><svg><use href="#shear"/></svg></button><button aria-label="Układ"><svg><use href="#lay"/></svg></button>
<i class="sep"></i>
<button aria-label="Przesuń"><svg><use href="#move"/></svg></button><button aria-label="Obróć"><svg><use href="#rot"/></svg></button><button aria-label="Lustro"><svg><use href="#mir"/></svg></button><button aria-label="Podziel"><svg><use href="#div"/></svg></button><button aria-label="Informacje"><svg><use href="#info"/></svg></button><button aria-label="Ustawienia"><svg><use href="#opt"/></svg></button><button aria-label="Generuj"><svg><use href="#gears"/></svg></button>
</div>
<div class="toolbar last">
<span class="grip"></span>
<button aria-label="Import"><svg><use href="#mon1"/></svg></button><button aria-label="Eksport"><svg><use href="#mon2"/></svg></button><button aria-label="Import CAD"><svg><use href="#ar1"/></svg></button><button aria-label="Eksport CAD"><svg><use href="#ar2"/></svg></button>
</div>
</div>

<div class="row">
<div class="toolbar">
<span class="grip"></span>
<button aria-label="Węzeł"><svg><use href="#node"/></svg></button><button class="dd" aria-label="Więcej węzłów"></button><button aria-label="Linia"><svg><use href="#line"/></svg></button><button aria-label="Pręt"><svg><use href="#member"/></svg></button><button class="dd" aria-label="Więcej prętów"></button><button aria-label="Polilinia"><svg><use href="#poly"/></svg></button><button class="dd" aria-label="Więcej linii"></button>
<i class="sep"></i>
<button aria-label="Podpora węzłowa"><svg><use href="#sup"/></svg></button><button aria-label="Podpora liniowa"><svg><use href="#lsup"/></svg></button><button aria-label="Podpora powierzchniowa"><svg><use href="#ssup"/></svg></button>
<i class="sep"></i>
<button aria-label="Wymiar"><svg><use href="#dim"/></svg></button><button class="dd" aria-label="Więcej wymiarów"></button><button aria-label="Komentarz"><svg><use href="#txt"/></svg></button><button aria-label="Linia pomocnicza"><svg><use href="#guide"/></svg></button>
<i class="sep"></i>
<button aria-label="Powierzchnia"><svg><use href="#surf"/></svg></button><button class="dd" aria-label="Więcej powierzchni"></button><button aria-label="Otwór"><svg><use href="#opng"/></svg></button><button class="dd" aria-label="Więcej otworów"></button><button aria-label="Powierzchnia krzywa"><svg><use href="#curv"/></svg></button><button class="dd" aria-label="Więcej krzywych"></button><button aria-label="Bryła"><svg><use href="#solid"/></svg></button><button aria-label="Nowa bryła"><svg><use href="#solid2"/></svg></button><button class="dd" aria-label="Więcej brył"></button>
<i class="sep"></i>
<button aria-label="Kombinacja"><svg><use href="#comb"/></svg></button><button class="dd" aria-label="Więcej kombinacji"></button><button aria-label="Obciążenie węzłowe"><svg><use href="#nload"/></svg></button><button aria-label="Obciążenie prętowe"><svg><use href="#lload"/></svg></button><button aria-label="Obciążenie liniowe"><svg><use href="#lload"/></svg></button><button aria-label="Obciążenie powierzchniowe"><svg><use href="#sload"/></svg></button><button aria-label="Obciążenie bryłowe"><svg><use href="#vload"/></svg></button><button class="dd" aria-label="Więcej obciążeń"></button>
</div>
<div class="toolbar">
<span class="grip"></span>
<button aria-label="Przesuń widok"><svg><use href="#pan"/></svg></button><button aria-label="Powiększ okno"><svg><use href="#zoomw"/></svg></button><button aria-label="Pokaż całość"><svg><use href="#zoomx"/></svg></button><button aria-label="Perspektywa"><svg><use href="#cube"/></svg></button><button aria-label="Izometria"><svg><use href="#cubes"/></svg></button>
<i class="sep"></i>
<button aria-label="Widok X"><svg><use href="#vx"/></svg></button><button aria-label="Widok Y"><svg><use href="#vy"/></svg></button><button aria-label="Widok Z"><svg><use href="#vz"/></svg></button><button aria-label="Widok -X"><svg><use href="#vmx"/></svg></button><button class="dd" aria-label="Więcej widoków"></button><button aria-label="Tryb wyświetlania"><svg><use href="#micro"/></svg></button><button class="dd" aria-label="Więcej trybów"></button>
<i class="sep"></i>
<button aria-label="Widoczność"><svg><use href="#visib"/></svg></button><button class="dd" aria-label="Więcej widoczności"></button>
</div>
<div class="toolbar last">
<span class="grip"></span>
<button aria-label="Deformacje"><svg><use href="#defo"/></svg></button><button aria-label="Przekrój"><svg><use href="#cyl"/></svg></button>
<i class="sep"></i>
<button aria-label="Wyniki prętów"><svg><use href="#ires"/></svg></button><button aria-label="Wyniki powierzchni"><svg><use href="#sres"/></svg></button><button aria-label="Wyniki brył"><svg><use href="#vres"/></svg></button><button aria-label="Reakcje"><svg><use href="#react"/></svg></button><button aria-label="Wykresy"><svg><use href="#memr"/></svg></button><button aria-label="Grupy"><svg><use href="#grp"/></svg></button><button class="dd" aria-label="Więcej grup"></button><button aria-label="Sekcja"><svg><use href="#isec"/></svg></button><button aria-label="Tabele wyników"><svg><use href="#tabl"/></svg></button>
<i class="sep"></i>
<button aria-label="Panel"><svg><use href="#ctrl"/></svg></button><button aria-label="Kreator"><svg><use href="#wand"/></svg></button><button class="dd" aria-label="Więcej kreatorów"></button><button aria-label="Kolory"><svg><use href="#colr"/></svg></button><button class="dd" aria-label="Więcej kolorów"></button>
</div>
</div>

<div class="main">
<aside class="navigator">
  <div class="navhead"><h2>Nawigator projektu - Dane</h2><button aria-label="Przypnij"><svg><use href="#pin"/></svg></button><button aria-label="Zamknij nawigator"><svg><use href="#x"/></svg></button></div>
  <div class="treebox">
  <ul class="tree">
  <li class="root"><i class="g e minus"></i><svg><use href="#rf"/></svg><b>RFEM-Beispiel-01</b></li>
  <li><i class="g n"></i><i class="g v t minus"></i><svg><use href="#fo"/></svg>Dane modelu</li>
  <li><i class="g n"></i><i class="g v"></i><i class="g v t plus"></i><svg viewBox="0 0 16 16"><use href="#f"/><circle cx="8" cy="9" r="1.500" fill="#d22"/></svg>Węzły</li>
  <li><i class="g n"></i><i class="g v"></i><i class="g v t plus"></i><svg viewBox="0 0 16 16"><use href="#f"/><path d="M4 13l8-8" stroke="#822"/></svg>Linie</li>
  <li><i class="g n"></i><i class="g v"></i><i class="g v t plus"></i><svg viewBox="0 0 16 16"><use href="#f"/><path d="M5 6h3v6h-3z" fill="#2a4"/><path d="M8 8h4v4h-4z" fill="#36c"/><path d="M8 5h3v3h-3z" fill="#c33"/></svg>Materiały</li>
  <li><i class="g n"></i><i class="g v"></i><i class="g v t plus"></i><svg viewBox="0 0 16 16"><use href="#f"/><path d="M4 9l3-3 5 1-3 4z" fill="#5b8ec8"/></svg>Powierzchnie</li>
  <li><i class="g n"></i><i class="g v"></i><i class="g v t"></i><svg viewBox="0 0 16 16"><use href="#f"/><path d="M4 6l4-1 4 1v5l-3 2-4-2z" fill="#4c78b0" stroke="#456" stroke-width=".7"/></svg>Bryły</li>
  <li><i class="g n"></i><i class="g v"></i><i class="g v t plus"></i><svg viewBox="0 0 16 16"><use href="#f"/><path d="M5 6h6v6h-6z" fill="#e8d860" stroke="#3c6ca4" stroke-width="1.600"/></svg>Otwory</li>
  <li><i class="g n"></i><i class="g v"></i><i class="g v t plus"></i><svg viewBox="0 0 16 16"><use href="#f"/><path d="M8 7l4 6h-8z" fill="#1c8a3c"/><path d="M7 3h2v3h-2z" fill="#d22"/></svg>Podpory węzłowe</li>
  <li><i class="g n"></i><i class="g v"></i><i class="g v t plus"></i><svg viewBox="0 0 16 16"><use href="#f"/><path d="M4 7h8" stroke="#a22" stroke-width="2"/><path d="M5 8l2 4h-4zM11 8l2 4h-4z" fill="#1c8a3c"/></svg>Podpory liniowe</li>
  <li><i class="g n"></i><i class="g v"></i><i class="g v t"></i><svg viewBox="0 0 16 16"><use href="#f"/><path d="M4 7l4-2 5 1-1 5-4 2z" fill="#256b4c"/><path d="M4 7l4-2 5 1-4 2z" fill="#5b8ec8"/></svg>Podpory powierzchniowe</li>
  <li><i class="g n"></i><i class="g v"></i><i class="g v t"></i><svg viewBox="0 0 16 16"><use href="#f"/><path d="M4 10l3-3 2 2 3-2v3z" fill="#eee" stroke="#aaa"/></svg>Zwolnienia liniowe</li>
  <li><i class="g n"></i><i class="g v"></i><i class="g v t"></i><svg viewBox="0 0 16 16"><use href="#f"/><path d="M4 10l3-3h5l-2 4z" fill="#3d79b8" stroke="#345" stroke-width=".7"/></svg>Zmienne wysokości</li>
  <li><i class="g n"></i><i class="g v"></i><i class="g v t"></i><svg viewBox="0 0 16 16"><use href="#f"/><path d="M4 9l3-2 5 1-3 3z" fill="#3d79b8" stroke="#a33"/></svg>Powierzchnie ortotropowe i memb</li>
  <li><i class="g n"></i><i class="g v"></i><i class="g v t plus"></i><svg viewBox="0 0 16 16"><use href="#f"/><path d="M4 6h4M6 6v6M4 12h4" stroke="#c33" stroke-width="1.500"/><path d="M8 5h5l-1 7h-4z" fill="#5474d8"/></svg>Przekroje</li>
  <li><i class="g n"></i><i class="g v"></i><i class="g v t plus"></i><svg viewBox="0 0 16 16"><use href="#f"/><path d="M5 5v8M5 8h7" stroke="#555"/><circle cx="6" cy="8" r="1.500" fill="#c33"/></svg>Zwolnienia na końcach pręta</li>
  <li><i class="g n"></i><i class="g v"></i><i class="g v t plus"></i><svg viewBox="0 0 16 16"><use href="#f"/><path d="M4 13l7-7M6 7l6-3" stroke="#a63" stroke-width="1.500"/></svg>Mimośrody prętowe</li>
  <li><i class="g n"></i><i class="g v"></i><i class="g v t"></i><svg viewBox="0 0 16 16"><use href="#f"/><path d="M4 13l8-8M6 8l4 3" stroke="#333"/></svg>Odcinki pręta</li>
  <li><i class="g n"></i><i class="g v"></i><i class="g v t plus"></i><svg viewBox="0 0 16 16"><use href="#f"/><path d="M4 13l8-8" stroke="#777" stroke-width="1.500"/></svg>Pręty</li>
  <li><i class="g n"></i><i class="g v"></i><i class="g v t"></i><svg viewBox="0 0 16 16"><use href="#f"/><path d="M4 9l3-2 5 1-3 2z" fill="#ddd" stroke="#777"/></svg>Żebra</li>
  <li><i class="g n"></i><i class="g v"></i><i class="g v t"></i><svg viewBox="0 0 16 16"><use href="#f"/><path d="M4 7h8" stroke="#a22"/><path d="M5 7v4M8 7v4M11 7v4" stroke="#183" stroke-width="2"/></svg>Sprężyste podłoża prętowe</li>
  <li><i class="g n"></i><i class="g v"></i><i class="g v t"></i><svg viewBox="0 0 16 16"><use href="#f"/><path d="M8 4v9" stroke="#555"/><path d="M7 5h2v2h-2zM7 10h2v2h-2z" fill="#c22"/></svg>Nieliniowości prętowe</li>
  <li><i class="g n"></i><i class="g v"></i><i class="g v t"></i><svg viewBox="0 0 16 16"><use href="#f"/><path d="M4 12l4-6 3 6" stroke="#a33" fill="none"/><circle cx="9" cy="6" r="1" fill="#c22"/></svg>Zbiory prętów</li>
  <li><i class="g n"></i><i class="g v"></i><i class="g v t"></i><svg viewBox="0 0 16 16"><use href="#f"/><path d="M8 5l4 3-4 4-4-3z" fill="#4f86c0" stroke="#457" stroke-width=".7"/></svg>Przecięcia płaszczyzn</li>
  <li><i class="g n"></i><i class="g v"></i><i class="g v t plus"></i><svg viewBox="0 0 16 16"><use href="#f"/><path d="M4 5h8v7h-8zM4 8h8M8 5v7" fill="#9db" stroke="#678"/></svg>Zagęszczenia siatki ES</li>
  <li><i class="g n"></i><i class="g v"></i><i class="g v t end"></i><svg><use href="#f"/></svg>Zwolnienia węzła</li>
  <li><i class="g n"></i><i class="g v t minus"></i><svg><use href="#fo"/></svg>Przypadki obciążeń i kombinacje</li>
  <li><i class="g n"></i><i class="g v"></i><i class="g v t plus"></i><svg viewBox="0 0 16 16"><path d="M0 14h15" stroke="#555" stroke-width="1.500"/><path d="M11 4v6h-1l2 3 2-3h-1v-6z" fill="#3f63b4"/></svg>Przypadek obciążenia</li>
  <li><i class="g n"></i><i class="g v"></i><i class="g v t plus"></i><svg viewBox="0 0 16 16"><path d="M0 2h5v3h-5zM0 11h5v3h-5z" fill="#fff" stroke="#333"/><path d="M7 3q5 0 5 4M7 13q5 0 5-3" fill="none" stroke="#333"/><path d="M10 6h6v4h-6z" fill="#1aa01a"/></svg>Kombinacje obciążeń</li>
  <li><i class="g n"></i><i class="g v"></i><i class="g v t end"></i><svg viewBox="0 0 16 16"><path d="M0 2h5v3h-5zM0 11h5v3h-5z" fill="#fff" stroke="#333"/><path d="M7 3q5 0 5 4M7 13q5 0 5-3" fill="none" stroke="#333"/><path d="M10 6h6v4h-6z" fill="#3c78c8"/></svg>Kombinacje wyników</li>
  <li><i class="g n"></i><i class="g v t plus"></i><svg><use href="#f"/></svg>Obciążenia</li>
  <li><i class="g n"></i><i class="g v t"></i><svg><use href="#f"/></svg>Wyniki</li>
  <li><i class="g n"></i><i class="g v t"></i><svg><use href="#f"/></svg>Przekroje</li>
  <li><i class="g n"></i><i class="g v t"></i><svg><use href="#f"/></svg>Obszary pośrednie</li>
  <li><i class="g n"></i><i class="g v t"></i><svg><use href="#f"/></svg>Protokoły wydruku</li>
  <li><i class="g n"></i><i class="g v t plus"></i><svg><use href="#f"/></svg>Obiekty pomocnicze</li>
  <li><i class="g n"></i><i class="g v t minus"></i><svg><use href="#fo"/></svg>Moduły dodatkowe</li>
  <li><i class="g n"></i><i class="g v"></i><i class="g v t"></i><svg viewBox="0 0 16 16"><use href="#mod"/><path d="M3 10l3-4h7l-3 4z" fill="#2aa04a" stroke="#224"/><path d="M3 11h7l3-4" fill="none" stroke="#1c3fa0" stroke-width="1.500"/></svg>RF-STEEL Surfaces - Globalna anal</li>
  <li><i class="g n"></i><i class="g v"></i><i class="g v t"></i><svg viewBox="0 0 16 16"><use href="#mod"/><path d="M8 4l5-1v8l-4 2z" fill="#aaa"/><path d="M3 5h6M6 5v7M3 12h6" stroke="#34507c" stroke-width="1.500"/></svg>RF-STEEL Members - Globalna ana</li>
  <li><i class="g n"></i><i class="g v"></i><i class="g v t"></i><svg viewBox="0 0 16 16"><use href="#mod"/><path d="M5 4l7-1v6h-7z" fill="#999"/><path d="M7 6.500h-3v7h3M4 10h3M13 8.500q-4-1-4 2.500t4 2.500" fill="none" stroke="#111" stroke-width="1.200"/></svg>RF-STEEL EC3 - Wymiarowanie prę</li>
  <li><i class="g n"></i><i class="g v"></i><i class="g v t"></i><svg viewBox="0 0 16 16"><use href="#mod"/><path d="M5 4l7-1v6h-7z" fill="#999"/></svg>RF-STEEL AISC - Wymiarowanie</li>
  </ul>
  <div class="vbar"><svg viewBox="0 0 16 16"><path d="M4.500 10l3.500-4 3.500 4" fill="none" stroke="#555" stroke-width="2"/></svg><i></i><svg viewBox="0 0 16 16"><path d="M4.500 6l3.500 4 3.500-4" fill="none" stroke="#555" stroke-width="2"/></svg></div>
  <div class="hbar"><svg viewBox="0 0 16 16"><path d="M10 4.500l-4 3.500 4 3.500" fill="none" stroke="#555" stroke-width="2"/></svg><i></i><svg viewBox="0 0 16 16"><path d="M6 4.500l4 3.500-4 3.500" fill="none" stroke="#555" stroke-width="2"/></svg></div>
  </div>
  <div class="navtabs">
    <button class="on"><svg viewBox="0 0 16 16"><path d="M3 1h13v7h-13z" fill="#fff" stroke="#3c6fc0"/><path d="M3 2h13" stroke="#3c6fc0" stroke-width="2"/><path d="M0 5h6v6h-6z" fill="#efc92c" stroke="#987c10"/><circle cx="9" cy="9" r="3.500" fill="#dcecfc" stroke="#2c3f6c" stroke-width="1.500"/><path d="M12 12l3 4" stroke="#a5622c" stroke-width="2"/></svg>Dane</button>
    <button><svg viewBox="0 0 16 16"><path d="M2 4h12v11h-12z" fill="#fff" stroke="#2f57b0"/><path d="M4 8h8M4 10.500h8M4 13h8" stroke="#2f57b0"/><path d="M3 3l6-3 6 1v4h-7l-3 1z" fill="#b08a6c" stroke="#4c3524" stroke-width=".7"/></svg>Wyświetl</button>
    <button><svg viewBox="0 0 16 16"><path d="M12 1l-6 8M2 14h13M4 10q8 0 6 4" stroke="#2f55b8" stroke-width="2.400" fill="none"/><path d="M1 15l4-6" stroke="#2f55b8"/></svg>Tryb wyświetlania</button>
  </div>
</aside>

<div class="canvas">
<svg class="scene" viewBox="299 108 1005 788" preserveAspectRatio="xMinYMin slice">
<defs>
<pattern id="dots" width="45" height="50" patternUnits="userSpaceOnUse" patternTransform="matrix(1 .151 0 1 357 98.500)"><path d="M0 0h1.200v1.200h-1.200z" fill="#e8f5e8"/></pattern>
<pattern id="mU" width="400" height="7.770" patternUnits="userSpaceOnUse" patternTransform="matrix(1 .1495 0 1 538 176)"><path d="M0 .5h400" stroke="#0b8080" stroke-width=".8"/></pattern>
<pattern id="mV" width="400" height="13.400" patternUnits="userSpaceOnUse" patternTransform="matrix(1 -.447 0 1 538 176)"><path d="M0 .5h400" stroke="#0b8080" stroke-width=".8"/></pattern>
<pattern id="v13" width="13.040" height="50" patternUnits="userSpaceOnUse" patternTransform="translate(381.500 0)"><path d="M.5 0v50" stroke="#1a8282" stroke-width="1"/></pattern>
<pattern id="v22" width="22.500" height="50" patternUnits="userSpaceOnUse" patternTransform="translate(538 0)"><path d="M.5 0v50" stroke="#0b8080" stroke-width="1"/></pattern>
<pattern id="h25a" width="400" height="25" patternUnits="userSpaceOnUse" patternTransform="matrix(1 -.447 0 1 381.500 246)"><path d="M0 .5h400" stroke="#1a8282"/></pattern>
<pattern id="h25b" width="400" height="25.200" patternUnits="userSpaceOnUse" patternTransform="matrix(1 .148 0 1 538 176)"><path d="M0 .5h400" stroke="#0b8080"/></pattern>
<linearGradient id="col"><stop offset="0" stop-color="#4c49c4"/><stop offset=".25" stop-color="#6c69ee"/><stop offset=".55" stop-color="#4b48b8"/><stop offset="1" stop-color="#5552cc"/></linearGradient>
</defs>
<path d="M299 108h1100v900h-1100z" fill="#000"/>
<path d="M357.500 108v493l1000 152v-645z" fill="#0a0a0a"/>
<path d="M988.500 108v140" stroke="#333" stroke-width="1.500"/>
<path d="M381.500 246l156.500-46v177l-156.500 70z" fill="#898989"/><path d="M538 240l180 30v133l-180-26z" fill="#6a6a6a"/>
<path d="M381.500 246l156.500-46v177l-156.500 70z" fill="url(#v13)"/><path d="M381.500 246l156.500-46v177l-156.500 70z" fill="url(#h25a)"/>
<path d="M538 240l180 30v133l-180-26z" fill="url(#v22)"/><path d="M538 240l180 30v133l-180-26z" fill="url(#h25b)"/>
<path d="M357 108v497l1000 152v-649z" fill="url(#dots)"/>
<path d="M538 108v68M538 378v251" stroke="#086464" stroke-width="2"/>
<path d="M538 289v88" stroke="#b4b4b4" stroke-width="1.500"/>
<path d="M360 150l178 26M966 240l340 51" stroke="#0b7474" stroke-width="1.200"/><path d="M360 150l178 26M966 240l340 51" stroke="#fff" stroke-width="1.200" stroke-dasharray="9 4 2 4"/>
<path d="M538 176l428 64q34 14 35 32v38h-290l-329.500-64z" fill="#6f6f6f"/>
<path d="M538 176l428 64q34 14 35 32v38h-290l-329.500-64z" fill="url(#mU)"/>
<path d="M538 176l428 64q34 14 35 32v38h-290l-329.500-64z" fill="url(#mV)"/>
<path d="M538 176l-156.500 70 156.500 24z" fill="url(#v13)" opacity=".55"/>
<path d="M538 176l428 64v70h-255l-173-40z" fill="url(#v22)" opacity=".6"/>
<path d="M381.500 247l329 49v8l-329-51z" fill="#777"/>
<path d="M445 278l-4 20 5 18M441 298l-14 4M447 322l-12 26 11 5 6-15M435 348l-14-5M446 353l2 14M470 326l9 28-6 10M472 300l10 28-4 12M478 328l14-6M455 268l6 16 14-14" fill="none" stroke="#0b8080"/>
<path d="M660 256l-17-3M712 234l-22-12 22-4 30 8M801 246l44 1M801 246l20 12-10 15M801 246l20-10M749 269l-10 10M749 269l32-4 18 10M660 256l8 16M690 222l-32 16-20 14 24 14M742 226l40 10 34 8M638 252l-24-4M662 266l-20 8" fill="none" stroke="#0b8080"/>
<path d="M711 234l90 13-52 22-89-13z" fill="#6b6b6b"/>
<path d="M733 237v30M711 234v29M756 240v26M779 244v11M682 247l90 13M696 241l92 13" stroke="#0b8080" fill="none" stroke-width=".8"/>
<path d="M711 232l93 14-54 25-93-14z" fill="none" stroke="#f82cf8" stroke-width="1.500" stroke-dasharray="5 2 2 2"/>
<path d="M711 234l90 13-52 22-89-13z" fill="none" stroke="#f4f4f4" stroke-width="1.300"/>
<path d="M538 176l428 64q34 12 35 30v8M381.500 246l156.500-70M381.500 246l329 49M966 240l-86 38" fill="none" stroke="#f4f4f4" stroke-width="1.300"/>
<path d="M966 240v40" stroke="#aaa" stroke-width="1.300"/>
<path d="M381.500 246v201" stroke="#e2e2e2" stroke-width="1.500"/>
<path d="M381.500 447l156.500-70 176 25.500" fill="none" stroke="#3ee03e" stroke-width="1.500"/>
<path d="M381 252l334 49v15l-334-49z" fill="#6361dc" stroke="#2d2b86"/>
<g transform="rotate(4 460 311)"><ellipse cx="460" cy="311" rx="13" ry="26" fill="#0a0a0a" stroke="#ff46ff" stroke-width="2" stroke-dasharray="4 2"/><ellipse cx="460" cy="311" rx="12" ry="25" fill="#0a0a0a" stroke="#fff" stroke-width="1.500"/></g>
<path d="M460 308v6M458 312l4-2" stroke="#999"/>
<use href="#sup7" x="381.500" y="438" width="40" height="26"/><use href="#sup7" x="420.500" y="420" width="40" height="26"/><use href="#sup7" x="459" y="402" width="40" height="26"/><use href="#sup7" x="498.500" y="385" width="40" height="26"/><use href="#sup7" x="561" y="382" width="40" height="26"/><use href="#sup7" x="647" y="395" width="40" height="26"/>
<path d="M644 287q8-4 17 0v201h-17z" fill="url(#col)" opacity=".94"/>
<use href="#sup7" x="632" y="487" width="40" height="26"/>
<g fill="#f01818"><circle cx="381.500" cy="246" r="2"/><circle cx="381.500" cy="447" r="2"/><circle cx="538" cy="377" r="2"/><circle cx="652" cy="286" r="2"/><circle cx="966" cy="240" r="2"/><circle cx="461.500" cy="286" r="1.800"/><circle cx="472" cy="309" r="1.800"/><circle cx="458" cy="336" r="1.800"/><circle cx="712" cy="234" r="1.500"/><circle cx="801" cy="247" r="1.500"/><circle cx="749" cy="269" r="1.500"/><circle cx="660" cy="256" r="1.500"/></g>
<circle cx="386.500" cy="259.500" r="2.500" stroke="#c8d0e8" stroke-width="1.500"/><circle cx="652" cy="291" r="2.500" stroke="#c8d0e8" stroke-width="1.500"/>
<path d="M538 176l28 4" stroke="#f01010" stroke-width="2"/><path d="M564 177l9 4-9 2z" fill="#b01010"/>
<path d="M538 176l-16 7" stroke="#10f010" stroke-width="2"/><path d="M524 179l-8 6 10-.5z" fill="#0cb00c"/>
<path d="M538 177v30" stroke="#0ff" stroke-width="2"/><path d="M536 206h4l-2 9z" fill="#08b0b0"/>
<text x="578" y="186" class="ax" fill="#f02020">X</text><text x="510" y="190" class="ax" fill="#20f020">Y</text><text x="535" y="229" class="ax" fill="#20f0f0">Z</text>
<rect x="333.500" y="139.500" width="26" height="16" rx="8" fill="#000" stroke="#fff" stroke-width="1.500"/><text x="343.500" y="151" class="ax" fill="#fff">A</text>
<circle cx="1309" cy="293" r="8" fill="#ddd"/>
</svg>
</div>
</div>

<footer class="status">
  <span class="spacer"></span>
  <div class="flags"><span>SKOK</span><span>SIATKA</span><span>KARTEZ</span><span>OSKOK</span><span>LINIE</span><span>DXF</span></div>
  <i class="c1"></i><i class="c2"></i><i class="c3"></i><i class="c3"></i><i class="c4"></i>
  <svg class="size" viewBox="0 0 12 12"><path d="M9 0h2v2h-2zM9 4h2v2h-2zM9 8h2v2h-2zM5 4h2v2h-2zM5 8h2v2h-2zM1 8h2v2h-2z" fill="#6d717a"/></svg>
</footer>
</div>

<svg class="callout" viewBox="0 0 180 230" aria-hidden="true"><circle cx="15.500" cy="17" r="13" fill="none" stroke="#c00b0b" stroke-width="2.500"/><path d="M18 26l134 187" stroke="#c00b0b" stroke-width="3"/><path d="M162 221l-15-9 14-7z" fill="#c00b0b" stroke="#c00b0b"/></svg>

<section class="dialog" role="dialog" aria-labelledby="dt">
<div class="dtitle"><h2 id="dt">Płaszczyzna robocza i raster/uchwycenie</h2><button class="close" aria-label="Zamknij okno"><svg><use href="#x"/></svg></button></div>
<form class="dbody">
<div class="two">
  <section class="group"><h3>Płaszczyzna robocza</h3><div class="gb">
    <label class="ln" for="cs">Układ współrzędnych:</label>
    <div class="line gap4"><select id="cs" class="sel hot grow"><option>Globalny XYZ</option></select><button type="button" class="ib" aria-label="Nowy układ"><svg><use href="#newwin"/></svg></button><button type="button" class="ib" disabled aria-label="Edytuj układ"><svg viewBox="0 0 18 18"><path d="M1 3h16v12h-16z" fill="#ddd" stroke="#999"/><path d="M3 7l5-1 6 1 1 3-5 3-6-2z" fill="#999" stroke="#777"/></svg></button></div>
    <div class="line planes">
      <div class="radios"><label><input type="radio" name="pl">XY</label><label><input type="radio" name="pl">YZ</label><label><input type="radio" name="pl" checked>XZ</label></div>
      <svg class="planepic" viewBox="0 0 98 67"><path d="M0 0h98v67h-98z" fill="url(#gCream)"/><path d="M27 11l43 4v35l-43-4z" fill="#fac79c" stroke="#c9a184"/><path d="M34 21l29-17v35l-29 18z" fill="#ccc" fill-opacity=".5" stroke="#aaa"/><path d="M11 37l33-16 41 3-31 16z" fill="#bbb" fill-opacity=".6" stroke="#888"/><path d="M48 30v22M48 11v19M48 30l-20 11M48 30l26 3" stroke="#444"/><circle cx="48" cy="30" r="3" fill="#b23a7c"/><path d="M72 30l8 3-8 2z" fill="#e33"/><path d="M25 43l7-5 1 5z" fill="#195"/><path d="M45.500 50h5l-2.500 6z" fill="#338"/><text x="80" y="37" class="ax2" fill="#e33">X</text><text x="17" y="49" class="ax2" fill="#195">Y</text><text x="45" y="65" class="ax2" fill="#338">Z</text></svg>
    </div>
  </div></section>
  <section class="group"><h3>Początek płaszczyzny roboczej</h3><div class="gb org">
    <div class="line"><label class="lbl wide" for="nd">Węzeł nr:</label><select id="nd" class="sel"><option></option></select><button type="button" class="ib" aria-label="Wskaż węzeł"><svg viewBox="0 0 18 18"><path d="M7 3l7 9-3.500.5 2 4-2 .5-2-3.500-1.500 1z" fill="#fff" stroke="#444"/><path d="M2 1l6 5M8 1l-6 5" stroke="#c22" stroke-width="1.500"/></svg></button><button type="button" class="ib" aria-label="Nowy węzeł"><svg><use href="#newwin"/></svg></button></div>
    <div class="rows">
    <div class="line"><span class="lbl">Współrzędne</span><label class="sub end" for="cx">X:</label><span class="spin"><input id="cx" value="0.000"><span class="ud"><button type="button" aria-label="X w górę"></button><button type="button" aria-label="X w dół"></button></span><button type="button" class="more" aria-label="X więcej"></button></span><span>[m]</span></div>
    <div class="line"><span class="lbl"></span><label class="sub end" for="cy">Y:</label><span class="spin"><input id="cy" value="0.000"><span class="ud"><button type="button" aria-label="Y w górę"></button><button type="button" aria-label="Y w dół"></button></span><button type="button" class="more" aria-label="Y więcej"></button></span><span>[m]</span></div>
    <div class="line"><span class="lbl"></span><label class="sub end" for="cz">Z:</label><span class="spin"><input id="cz" value="0.000"><span class="ud"><button type="button" aria-label="Z w górę"></button><button type="button" aria-label="Z w dół"></button></span><button type="button" class="more" aria-label="Z więcej"></button></span><span>[m]</span></div>
    </div>
  </div></section>
</div>
<div class="tabs" role="tablist"><button type="button" class="on" role="tab">Siatka/skok</button><button type="button" role="tab">Skok do obiektu</button><button type="button" role="tab">Linie pomocnicze</button><button type="button" role="tab">Warstwy tła</button><button type="button" role="tab">Linie rastru</button></div>
<div class="panel">
  <div class="left">
    <div class="pt">
      <section class="group"><h3>Pokaż</h3><div class="gb show">
        <label><input type="checkbox" checked>Raster</label><label><input type="checkbox" checked>Uchwycenie</label>
        <div class="line dist"><label for="dp">Odległość:</label><span class="spin s"><input id="dp" value="10"><span class="ud"><button type="button" aria-label="Więcej px"></button><button type="button" aria-label="Mniej px"></button></span></span><span>[px]</span></div>
      </div></section>
      <section class="group"><h3>Typ</h3><div class="gb show">
        <label><input type="radio" name="ty" checked>Kartezjański</label><label><input type="radio" name="ty">Biegunowy</label>
      </div></section>
    </div>
    <svg class="gridpic" viewBox="0 0 253 214" preserveAspectRatio="xMidYMid slice">
      <defs><pattern id="pd" width="52" height="71" patternUnits="userSpaceOnUse" patternTransform="translate(462 345) rotate(30)"><circle cx="4" cy="4" r="3" fill="#8c8c8c"/><circle cx="30" cy="40" r="2.600" fill="#aaa"/></pattern></defs>
      <path d="M-9-9h280v240h-280z" fill="url(#gCream)"/>
      <g transform="translate(-27 -9) scale(.3333)" fill="none">
        <path d="M60 0h820v700h-820z" fill="url(#pd)"/>
        <g stroke="#cfcfd4" stroke-width="3.500"><path d="M62-50l838 480M62 117l838 480M62 284l838 480M62 451l838 480M440 0l460 263"/><path d="M190-20l-130 226M431-20l-380 660M673-20l-420 730M910-10l-420 730M900 415l-180 310"/></g>
        <g stroke="#222" stroke-width="3"><path d="M373 83l362 209M400 143l-145 252M465 237l182 104M418 237l-53 98"/><path d="M553 187l-18 32M327 265l30 16M465 237l-8 18M512 262l-8 18M557 287l-8 18M600 312l-8 18M647 341l-8 18M418 237l20 11M400 270l20 11M382 302l20 11M365 335l20 11"/><path d="M548 347q4 22-4 40"/></g>
        <path d="M372 82l20 4-8 13zM736 293l-20-4 8-13zM553 188l-19-4 8-12zM553 188l19 4-8 12zM402 141l-2 20-13-8zM253 397l2-20 13 8zM327 265l2-18 12 7zM327 265l-2 18-12-7zM465 237l16 2-6 12zM512 264l-16-2 6-12zM647 341l-16-2 6-12zM557 287l16 2-6 12zM600 312l16 2-6 12zM418 237l0 15-12-6zM365 335l0-15 12 6zM382 302l0-15 12 6zM543 392l-6-20 15 0z" fill="#222"/>
        <path d="M462 345l115 65M462 345l-65 118" stroke="#666" stroke-width="5" stroke-dasharray="12 6"/><path d="M579 413l-24-3 10-16zM395 466l2-24 16 9z" fill="#666"/>
        <path d="M462 347h115" stroke="#f11" stroke-width="3"/><path d="M598 347l-25-10v20z" fill="#f11"/><path d="M462 347v115" stroke="#7fcf9a" stroke-width="5"/><path d="M462 482l-10-23h20z" fill="#0a9c46"/><circle cx="462" cy="346" r="5" fill="#b23a7c"/>
      </g>
      <g class="pt12" fill="#333">
        <text transform="translate(125 28) rotate(30)">n₁·b</text><text transform="translate(179 60) rotate(30)">n₁·b</text><text transform="translate(87 68) rotate(-60)">n₂·h</text><text transform="translate(63 106) rotate(-60)">n₂·h</text>
        <text x="136" y="72">b</text><text x="151" y="80">b</text><text x="166" y="89">b</text><text x="181" y="98">b</text>
        <text transform="translate(93 98) rotate(-60)">h</text><text transform="translate(100 87) rotate(-60)">h</text><text transform="translate(106 77) rotate(-60)">h</text>
        <text x="159" y="121">β</text>
      </g>
      <g class="ptb"><text x="121" y="103" fill="#666">0</text><text x="164" y="141" fill="#666">I</text><text x="101" y="161" fill="#666">2</text><text x="171" y="119" fill="#e22">X</text><text x="131" y="155" fill="#0a9c46">Y</text></g>
    </svg>
  </div>
  <div class="right">
    <section class="group"><h3>Ilość punktów rastru</h3><div class="gb show count">
      <label><input type="checkbox" checked>Dynamiczne w zależności od wielkości modelu</label>
      <div class="dim line heads"><span>(+)</span><span>(-)</span></div>
      <div class="rows2">
      <div class="dim line"><span class="lbl">Kierunek</span><span class="sub">1 :</span><span class="spin s"><input disabled aria-label="Kierunek 1 plus"><span class="ud"><button type="button" disabled aria-label="Więcej"></button><button type="button" disabled aria-label="Mniej"></button></span></span><span class="spin s"><input disabled aria-label="Kierunek 1 minus"><span class="ud"><button type="button" disabled aria-label="Więcej"></button><button type="button" disabled aria-label="Mniej"></button></span></span></div>
      <div class="dim line"><span class="lbl"></span><span class="sub">2 :</span><span class="spin s"><input disabled aria-label="Kierunek 2 plus"><span class="ud"><button type="button" disabled aria-label="Więcej"></button><button type="button" disabled aria-label="Mniej"></button></span></span><span class="spin s"><input disabled aria-label="Kierunek 2 minus"><span class="ud"><button type="button" disabled aria-label="Więcej"></button><button type="button" disabled aria-label="Mniej"></button></span></span></div>
      </div>
    </div></section>
    <section class="group"><h3>Rozstaw punktów rastru</h3><div class="gb rows pts">
      <div class="line"><span class="lbl">Odległość</span><label class="sub" for="b"><b>b</b> :</label><span class="spin"><input id="b" value="1.000"><span class="ud"><button type="button" aria-label="b w górę"></button><button type="button" aria-label="b w dół"></button></span><button type="button" class="more" aria-label="b więcej"></button></span><span>[m]</span></div>
      <div class="line"><span class="lbl"></span><label class="sub" for="h"><b>h</b> :</label><span class="spin"><input id="h" value="1.000"><span class="ud"><button type="button" aria-label="h w górę"></button><button type="button" aria-label="h w dół"></button></span><button type="button" class="more" aria-label="h więcej"></button></span><span>[m]</span></div>
      <div class="line rotrow"><span class="lbl">Obrót:</span><label class="sub" for="be"><b>β</b> :</label><span class="spin"><input id="be" value="0.00"><span class="ud"><button type="button" aria-label="Kąt w górę"></button><button type="button" aria-label="Kąt w dół"></button></span><button type="button" class="more" aria-label="Kąt więcej"></button></span><span>[°]</span></div>
    </div></section>
    <section class="group"><h3>Rozstaw linii rastru</h3><div class="gb rows pts">
      <div class="line"><span class="lbl">Numer:</span><label class="sub" for="n1"><b>n<small>1</small></b> :</label><span class="spin s"><input id="n1" value="10"><span class="ud"><button type="button" aria-label="n1 w górę"></button><button type="button" aria-label="n1 w dół"></button></span></span></div>
      <div class="line"><span class="lbl"></span><label class="sub" for="n2"><b>n<small>2</small></b> :</label><span class="spin s"><input id="n2" value="10"><span class="ud"><button type="button" aria-label="n2 w górę"></button><button type="button" aria-label="n2 w dół"></button></span></span></div>
    </div></section>
  </div>
</div>
<div class="dfoot">
  <button type="button" class="ib" aria-label="Pomoc"><svg viewBox="0 0 18 18"><circle cx="9" cy="8" r="7" fill="#f8f8fc" stroke="#667"/><path d="M6 14l-2 3 6-2z" fill="#fff" stroke="#667"/><path d="M6.500 6q0-3 2.500-3t2.500 2.500q0 1.500-2.500 3v1M9 11.500v1.500" fill="none" stroke="#1c3a8c" stroke-width="2"/></svg></button>
  <button type="button" class="ib" disabled aria-label="Komentarz"><svg viewBox="0 0 18 18"><path d="M3 2h9v14h-9z" fill="#eee" stroke="#999"/><path d="M5 5h5M5 8h5M5 11h4" stroke="#aaa"/><path d="M16 4l-7 9-2 1 .5-2.500 7-8.500z" fill="#aaa" stroke="#777"/></svg></button>
  <button type="button" class="ib" aria-label="Jednostki"><svg viewBox="0 0 18 18"><path d="M1 1h16v5h-16z" fill="#5cb860" stroke="#2f7a38" stroke-width=".7"/><path d="M4 3v3M7 3v3M10 3v3M13 3v3" stroke="#d8f5d8"/><text x="0" y="16" class="unit" fill="#1c2b5c">0.00</text></svg></button>
  <span class="grow"></span>
  <button type="button" class="pb def">OK</button><button type="button" class="pb">Anulować</button>
</div>
</form>
</section>
</div>
</body>
</html>
```
FILE: styles.css
```css
*{box-sizing:border-box}
html,body{height:100%}
body{margin:0;background:#fff;font:12px "Open Sans","Noto Sans",sans-serif;color:#111}
button,input,select{font:inherit;color:inherit;margin:0}
button{background:none;border:0;padding:0}
h1,h2,h3{margin:0;font-weight:400}
i{font-style:normal}
.defs{position:absolute;width:0;height:0}

.window{position:relative;display:flex;flex-direction:column;height:100vh;min-height:600px;padding:0 7px 7px;background:#6bacf6;border:1px solid #4c84c2;border-radius:3px;overflow:hidden}
.titlebar{display:flex;flex:none;height:29px;align-items:center}
.titlebar h1{flex:1;text-align:center;padding-right:20px;font-size:14px;color:#1c2733}
.applogo{width:18px;height:18px;margin:0 0 0 2px}
.winbtns{display:flex;align-self:flex-start;margin-left:-95px}
.winbtns button{display:flex;justify-content:center;height:20px;align-items:center}
.winbtns .min{width:23px}
.winbtns .min svg{width:10px;height:10px}
.winbtns .max{width:27px}
.winbtns .max svg{width:12px;height:10px}
.close{width:45px;color:#fff}
.winbtns .close,.dtitle .close{background:#c75050}
.close svg{width:9px;height:9px}

.client{display:flex;flex-direction:column;flex:1;min-height:0;border:1px solid #4f86c6;border-width:1px 1px 0 0;background:#d0d4dd}
.menubar{display:flex;flex:none;height:24px;align-items:center;color:#474b57;padding-left:3px;font-size:11px}
.menubar button{margin-right:15px}
.menubar u{text-underline-offset:2px}
.grip{flex:none;width:4px;height:14px;margin:0 4px 0 2px;background:repeating-linear-gradient(#fff0 0 2px,#a5abb8 2px 4px,#fff0 4px 5px);clip-path:inset(0 2px 0 0)}
.menubar .grip{margin:0 3px 0 0}
.bridge{width:16px;height:12px;margin-right:10px}
.mdi{display:flex;margin-left:auto;gap:6px;padding:4px 4px 0 0}
.menubar .mdi button{margin:0}
.mdi svg{width:10px;height:10px;display:block}

.row{display:flex;flex:none;height:26px;padding-right:2px}
.toolbar{display:flex;height:25px;align-items:center;padding-right:2px;border-radius:3px;background:linear-gradient(#eff1f7,#e3e6ee 50%,#d2d6e0);border-bottom:1px solid #b4b9c5}
.toolbar.last{padding-right:0}
.toolbar button{flex:none;width:22px;height:22px;display:flex;align-items:center;justify-content:center}
.toolbar svg{width:17px;height:17px;display:block}
.toolbar .on{border:1px solid #c08a4a;border-radius:2px;background:linear-gradient(#fdd9a0,#fff2b8)}
.toolbar .dd{width:13px}
.dd::before{content:"";border:3px solid transparent;border-top:4px solid #6d7280;border-bottom:0}
.sep{flex:none;width:8px;height:15px;background:linear-gradient(#9ea5b4,#9ea5b4) 3px 0/1px 100% no-repeat}
.case{width:216px;height:19px;margin:0 2px;padding:0 0 0 2px;border:0;appearance:none;font:11px "Noto Sans",sans-serif;color:#000;background:url("data:image/svg+xml,%3Csvg xmlns='http://www.w3.org/2000/svg' width='13' height='17'%3E%3Cpath d='M0 0h13v17h-13z' fill='%23d4d8e0'/%3E%3Cpath d='M4 7h6l-3 3z' fill='%23777'/%3E%3C/svg%3E") right 1px center no-repeat,#fff}

.main{display:flex;flex:1;min-height:0}
.navigator{display:flex;flex-direction:column;flex:none;width:285px;margin-right:6px}
.navhead{display:flex;flex:none;height:20px;align-items:center;padding:0 4px 0 3px;background:#bac1cd;border:1px solid #eef0f5;border-bottom-color:#99a0ae;color:#3e4450}
.navhead h2{flex:1;font-size:11px}
.navhead button{margin-left:7px;color:#667;display:flex}
.navhead svg{width:10px;height:10px}
.treebox{flex:1;min-height:0;display:grid;grid-template:minmax(0,1fr) 17px/minmax(0,1fr) 15px;margin:2px 3px 1px;border:1px solid #7d8594;background:#f0f0f0}
.tree{list-style:none;margin:0;padding:0 0 0 3px;overflow:hidden;background:#fbfaf1;font:11px "Noto Sans","Open Sans",sans-serif;color:#000}
.tree li{display:flex;align-items:center;height:18px;white-space:nowrap}
.tree li svg{flex:none;width:16px;height:16px;margin:0 3px 0 2px}
.g{flex:none;position:relative;width:19px;height:18px;background-repeat:no-repeat}
.g.v{background-image:repeating-linear-gradient(#808080 0 1px,#fff0 1px 2px);background-size:1px 100%;background-position:9px 0}
.g.v.t,.g.e{background-image:repeating-linear-gradient(#808080 0 1px,#fff0 1px 2px),repeating-linear-gradient(90deg,#808080 0 1px,#fff0 1px 2px);background-size:1px 100%,10px 1px;background-position:9px 0,9px 9px}
.g.v.t.end{background-size:1px 50%,10px 1px}
.g.e{background-size:1px 6px,10px 1px}
.plus::before,.minus::before{content:"";position:absolute;left:5px;top:5px;width:9px;height:9px;border:1px solid #999;background:linear-gradient(#3c5aa0,#3c5aa0) center/5px 1px no-repeat,#fff}
.plus::before{background:linear-gradient(#3c5aa0,#3c5aa0) center/5px 1px no-repeat,linear-gradient(#3c5aa0,#3c5aa0) center/1px 5px no-repeat,#fff}
.vbar,.hbar{display:flex;background:#f0f0f0}
.vbar{flex-direction:column;justify-content:space-between;padding-top:1px}
.vbar svg,.hbar svg{flex:none;width:16px;height:16px}
.vbar i{flex:0 1 40%;margin:7px 0 auto;background:#cdcdcd}
.hbar i{flex:0 1 35%;margin:0 auto 1px 1px;background:#cdcdcd}
.navtabs{display:flex;flex:none;height:23px;padding:1px 4px 2px;gap:6px;color:#474b57}
.navtabs button{display:flex;align-items:center;gap:2px;padding:0 2px;font-size:11px}
.navtabs svg{width:16px;height:16px}
.navtabs .on{background:#eef1f5;border:1px solid #c5d9dc;border-radius:2px}
.canvas{position:relative;flex:1;min-width:0;margin-bottom:1px;border-right:1px solid #fff;border-bottom:1px solid #fff;border-top:1px solid #333;background:#000;overflow:hidden}
.scene{position:absolute;inset:0;width:100%;height:100%}
.ax{font:10px "DejaVu Sans",sans-serif}
.ax2{font:bold 9px "Open Sans",sans-serif}

.status{display:flex;flex:none;height:23px;align-items:stretch;padding:2px 0 2px;border-top:1px solid #a5a9b3;background:linear-gradient(#d8dae0,#a9adb7 50%,#b6bac3 80%,#c9ccd4)}
.spacer{flex:1}
.flags{display:flex;gap:2px;margin-right:2px;font-size:11px;color:#2b2f38}
.flags span{padding:0 3px;line-height:16px;border:1px solid #fff;border-top-color:#222;border-left-color:#222}
.status>i{border-left:1px solid #9a9a9a}
.c1{width:152px}.c2{width:88px}.c3{width:74px}.c4{width:78px}
.size{width:12px;height:12px;align-self:flex-end}

.callout{position:absolute;left:878px;top:47px;width:180px;height:230px;pointer-events:none}

.dialog{position:absolute;right:42px;top:276px;width:562px;padding:0 6px 7px;background:#6bacf6;border:1px solid #4c84c2;border-top-color:#6bacf6;border-left-color:#6bacf6;border-radius:3px;font:11px "Liberation Sans",Arial,sans-serif;color:#000}
.dtitle{display:flex;height:29px;align-items:center;font-family:"Open Sans",sans-serif}
.dtitle h2{flex:1;text-align:center;font-size:14px;color:#1c2733}
.dtitle .close{width:31px;height:19px;align-self:flex-start;margin-left:-31px;display:flex;align-items:center;justify-content:center}
.dbody{margin:0;padding:7px 8px 8px;background:#f0f0f0;border:1px solid #4f86c6}
.two{display:grid;grid-template-columns:1fr 1fr;gap:8px}
.group{display:flex;flex-direction:column}
.group h3{height:16px;line-height:16px;padding-left:2px;font-size:11px;background:#dbe4f2;color:#1f3f73;clip-path:polygon(0 0,calc(100% - 10px) 0,100% 10px,100% 100%,0 100%)}
.gb{flex:1;display:flex;flex-direction:column;padding:6px 2px 4px 1px;background:#eff3f9;border:1px solid #a9a9ec;border-top-color:#fff;border-left-color:#dbe4f2}
.line{display:flex;align-items:center}
.line>span:last-child:not(.spin){padding-left:6px}
.gap4{gap:4px}
.grow{flex:1}
.ln{line-height:14px;margin-bottom:4px}
.sel{height:21px;width:60px;padding:0 20px 0 3px;border:1px solid #999;border-radius:0;appearance:none;background:url("data:image/svg+xml,%3Csvg xmlns='http://www.w3.org/2000/svg' width='10' height='8'%3E%3Cpath d='M1.500 2l3.500 3.500 3.500-3.500' fill='none' stroke='%23444' stroke-width='2'/%3E%3C/svg%3E") right 3px center no-repeat,#fff}
.sel.hot{flex:1;min-width:0;padding-left:5px;color:#fff;background:url("data:image/svg+xml,%3Csvg xmlns='http://www.w3.org/2000/svg' width='10' height='8'%3E%3Cpath d='M1.500 2l3.500 3.500 3.500-3.500' fill='none' stroke='%23444' stroke-width='2'/%3E%3C/svg%3E") right 3px center no-repeat,linear-gradient(#3399ff,#3399ff) 2px 2px/calc(100% - 21px) calc(100% - 4px) no-repeat,#fff}
.ib{flex:none;width:25px;height:21px;display:flex;align-items:center;justify-content:center;border:1px solid #a8a8a8;background:linear-gradient(#f2f2f2,#e2e2e2)}
.ib:disabled{border-color:#ccc;opacity:.8}
.ib svg{width:17px;height:17px}
.planes{align-items:flex-start;margin-top:6px}
.radios{width:61px;display:flex;flex-direction:column;gap:6px;padding-top:6px}
.radios label,.show>label{display:flex;align-items:center;gap:3px;height:14px}
.radios label{font-size:12px}
input[type=radio],input[type=checkbox]{appearance:none;flex:none;width:13px;height:13px;border:1px solid #555;background:#fff}
input[type=radio]{border-radius:50%}
input[type=radio]:checked{background:radial-gradient(circle,#222 0 3px,#fff 4px)}
input[type=checkbox]:checked{background:url("data:image/svg+xml,%3Csvg xmlns='http://www.w3.org/2000/svg' width='11' height='11'%3E%3Cpath d='M2 5.500l2.500 3 4.500-6.500' fill='none' stroke='%23000' stroke-width='2'/%3E%3C/svg%3E") center no-repeat,#fff}
.planepic{width:98px;height:67px;border:1px solid #999;border-right-color:#fff;border-bottom-color:#fff}
.org{padding:4px 2px 4px}
.org>.line{gap:5px}
.org>.line .wide{margin-right:-5px}
.lbl{width:72px;flex:none}
.wide{width:79px}
.sub{width:21px;flex:none;white-space:nowrap}
.sub.end{width:22px;text-align:right;padding-right:7px}
.sub small{font-size:9px}
.rows{display:flex;flex-direction:column;gap:3px}
.org .rows{margin-top:15px}
.spin{display:flex;flex:none;width:83px;height:20px;padding:1px;border:1px solid #7d9ab8;background:#fff}
.spin.s{width:45px;border-color:#a0a0a0}
.spin input{flex:1;min-width:0;width:0;padding:0 1px 0 0;border:0;text-align:right;background:none;font-size:12px}
.ud{display:flex;flex-direction:column;width:13px;flex:none}
.ud button,.more{flex:1;display:flex;align-items:center;justify-content:center;border:1px solid #aaa;background:#ececec}
.ud button::before{content:"";border:3px solid transparent;border-bottom-color:#000;border-top:0}
.ud button+button::before{border-bottom:0;border-top:3px solid #000}
.more{flex:none;width:9px;margin-left:1px}
.more::before{content:"";border:3px solid transparent;border-left-color:#000;border-right:0}
.dim{color:#9a9a9a}
.dim .spin{background:#f0f0f0;border-color:#bbb}
.dim .ud button::before{opacity:.5}

.tabs{display:flex;align-items:flex-end;height:20px;margin-top:10px}
.tabs button{height:19px;padding:0 5px;border:1px solid #a0a0a0;border-bottom:0;margin-left:-1px;background:linear-gradient(#f4f4f4,#e6e6e6)}
.tabs .on{height:21px;margin:0 0 -1px;padding:0 7px 3px;background:#fff;position:relative}
.panel{display:grid;grid-template-columns:1fr 1fr;gap:8px;padding:9px 6px 7px 7px;border:1px solid #a0a0a0;box-shadow:inset 0 0 0 2px #fff}
.left,.right{display:flex;flex-direction:column;gap:11px;min-width:0}
.pt{display:grid;grid-template-columns:154fr 92fr;gap:8px}
.show{padding:6px 2px 9px}
.show>label+label{margin-top:7px}
.dist{gap:5px;padding-left:15px;margin-top:3px}
.dist>label{flex:1;white-space:nowrap}
.dist>span:last-child:not(.spin){padding:0 3px 0 0}
.gridpic{flex:1 1 0;min-height:160px;width:100%;border:1px solid #999;border-right-color:#a9a9ec;border-bottom-color:#a9a9ec}
.pt12{font:italic 11px "Open Sans",sans-serif}
.ptb{font:bold 11px "DejaVu Sans",sans-serif}
.unit{font:italic bold 9px "Liberation Serif",serif}
.count{padding-bottom:6px}
.heads{margin-top:17px;height:14px;padding-left:109px}
.heads span+span{padding:0}
.heads span{width:54px}
.rows2{display:flex;flex-direction:column;gap:2px;margin-top:4px}
.rows2 .spin+.spin{margin-left:11px}
.pts{padding:4px 2px 7px}
.rotrow{margin-top:8px}
.dfoot{display:flex;align-items:center;gap:9px;margin-top:7px;padding-top:11px;border-top:1px solid #a0a0a0;box-shadow:inset 0 1px #fff}
.pb{width:73px;height:21px;border:1px solid #a8a8a8;background:linear-gradient(#f2f2f2,#e4e4e4)}
.pb.def{border-color:#3c94e8}
```
